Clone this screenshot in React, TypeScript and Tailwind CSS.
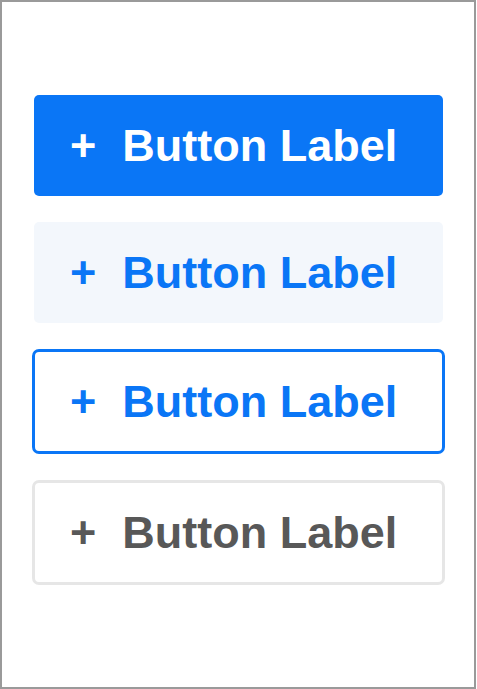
import React from "react";

type Variant = "solid" | "soft" | "outline" | "ghost";

const variants: Record<Variant, string> = {
  solid: "h-[101px] pl-[36px] bg-[#0a76f6] text-white rounded-[5px]",
  soft: "h-[101px] pl-[36px] bg-[#f3f7fc] text-[#0a76f6] rounded-[5px]",
  outline: "h-[105px] pl-[35px] -mx-[2px] border-[3px] border-[#0a76f6] text-[#0a76f6] rounded-[7px]",
  ghost: "h-[105px] pl-[35px] -mx-[2px] border-[3px] border-[#e6e6e6] text-[#585858] rounded-[7px]",
};

function LabelButton({ variant }: { variant: Variant }) {
  return (
    <button
      className={`${variants[variant]} flex items-center text-[45px] font-bold leading-none`}
      style={{ fontFamily: '"Liberation Sans", Arial, sans-serif' }}
    >
      <span className="mr-[26px]">+</span>
      <span>Button Label</span>
    </button>
  );
}

export default function App() {
  return (
    <div className="w-[476px] h-[689px] border-2 border-[#9a9a9a] bg-white">
      <div className="flex flex-col gap-[26px] pt-[93px] pl-[32px] pr-[31px]">
        <LabelButton variant="solid" />
        <LabelButton variant="soft" />
        <LabelButton variant="outline" />
        <LabelButton variant="ghost" />
      </div>
    </div>
  );
}
